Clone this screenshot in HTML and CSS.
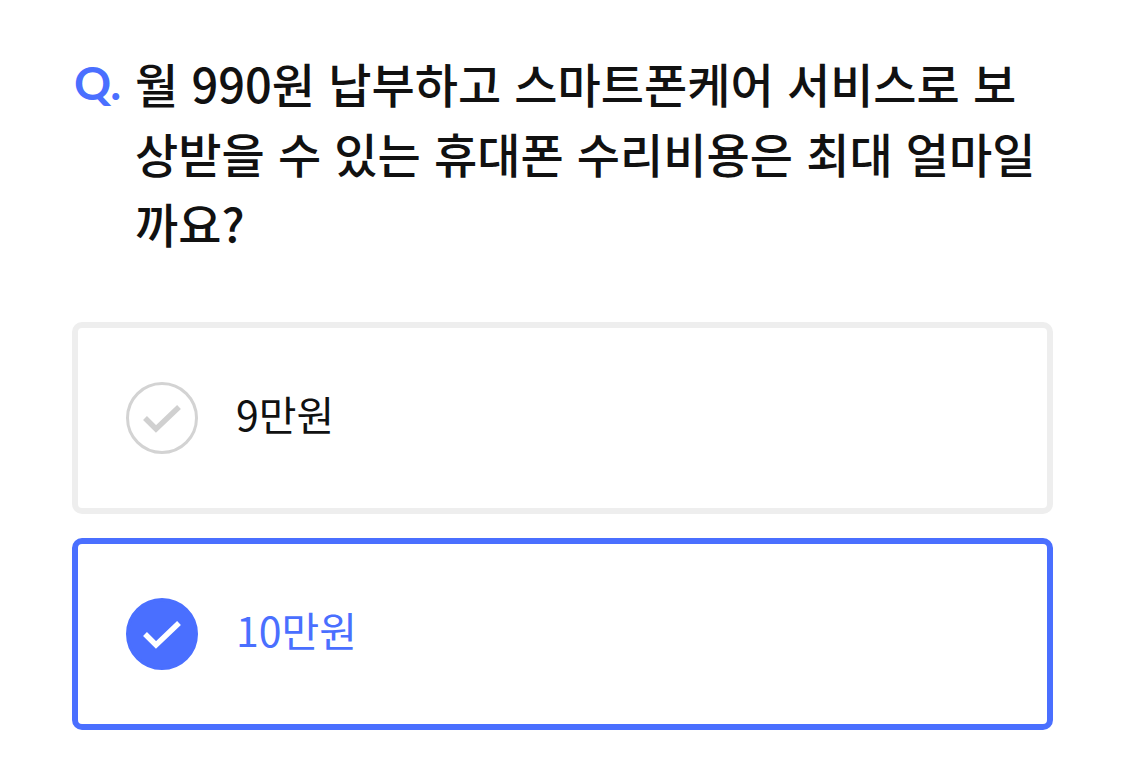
FILE: index.html
```html
<!DOCTYPE html>
<html lang="ko">
<head>
    <meta charset="UTF-8">
    <meta name="viewport" content="width=device-width, initial-scale=1.0">
    <title>퀴즈</title>
    <link rel="stylesheet" href="styles.css">
</head>
<body>

    <div class="quiz">
        <div class="question">
            <span class="q-mark">Q.</span>
            <p class="q-text">월 990원 납부하고 스마트폰케어 서비스로 보상받을 수 있는 휴대폰 수리비용은 최대 얼마일까요?</p>
        </div>

        <div class="options">
            <label class="option">
                <span class="check">
                    <svg viewBox="0 0 72 72"><path d="M19 36 L30 47 L53 25"/></svg>
                </span>
                <span class="option-text">9만원</span>
            </label>
            <label class="option selected">
                <span class="check">
                    <svg viewBox="0 0 72 72"><path d="M19 36 L30 47 L53 25"/></svg>
                </span>
                <span class="option-text">10만원</span>
            </label>
        </div>
    </div>

</body>
</html>
```

FILE: styles.css
```css
body {
    margin: 0;
    background: #fff;
    font-family: "Noto Sans CJK KR", sans-serif;
    color: #111;
}
.quiz {
    padding: 48px 72px 0 72px;
    width: 981px;
}
.question {
    display: flex;
    align-items: flex-start;
}
.q-mark {
    flex: none;
    width: 61px;
    padding-left: 2px;
    font-family: Lato, "Noto Sans CJK KR", sans-serif;
    font-size: 46px;
    font-weight: 700;
    line-height: 70px;
    color: #4a6fff;
}
.q-text {
    margin: 0;
    width: 912px;
    font-size: 47px;
    font-weight: 500;
    line-height: 70px;
    word-break: break-all;
}
.options {
    margin-top: 64px;
    display: flex;
    flex-direction: column;
    gap: 24px;
}
.option {
    display: flex;
    align-items: center;
    gap: 38px;
    height: 180px;
    padding: 0 48px;
    border: 6px solid #eeeeee;
    border-radius: 10px;
    cursor: pointer;
}
.check {
    flex: none;
    width: 72px;
    height: 72px;
    box-sizing: border-box;
    border: 3px solid #d3d3d3;
    border-radius: 50%;
    display: flex;
    align-items: center;
    justify-content: center;
}
.check svg {
    width: 72px;
    height: 72px;
    flex: none;
}
.check path {
    fill: none;
    stroke: #d0d0d0;
    stroke-width: 5.5;
}
.option-text {
    padding-bottom: 8px;
    font-size: 41px;
    line-height: 1.2;
    color: #111;
}
.selected {
    border-color: #4a6fff;
}
.selected .check {
    background: #4a6fff;
    border-color: #4a6fff;
}
.selected .check path {
    stroke: #fff;
}
.selected .option-text {
    color: #4a6fff;
}
```
